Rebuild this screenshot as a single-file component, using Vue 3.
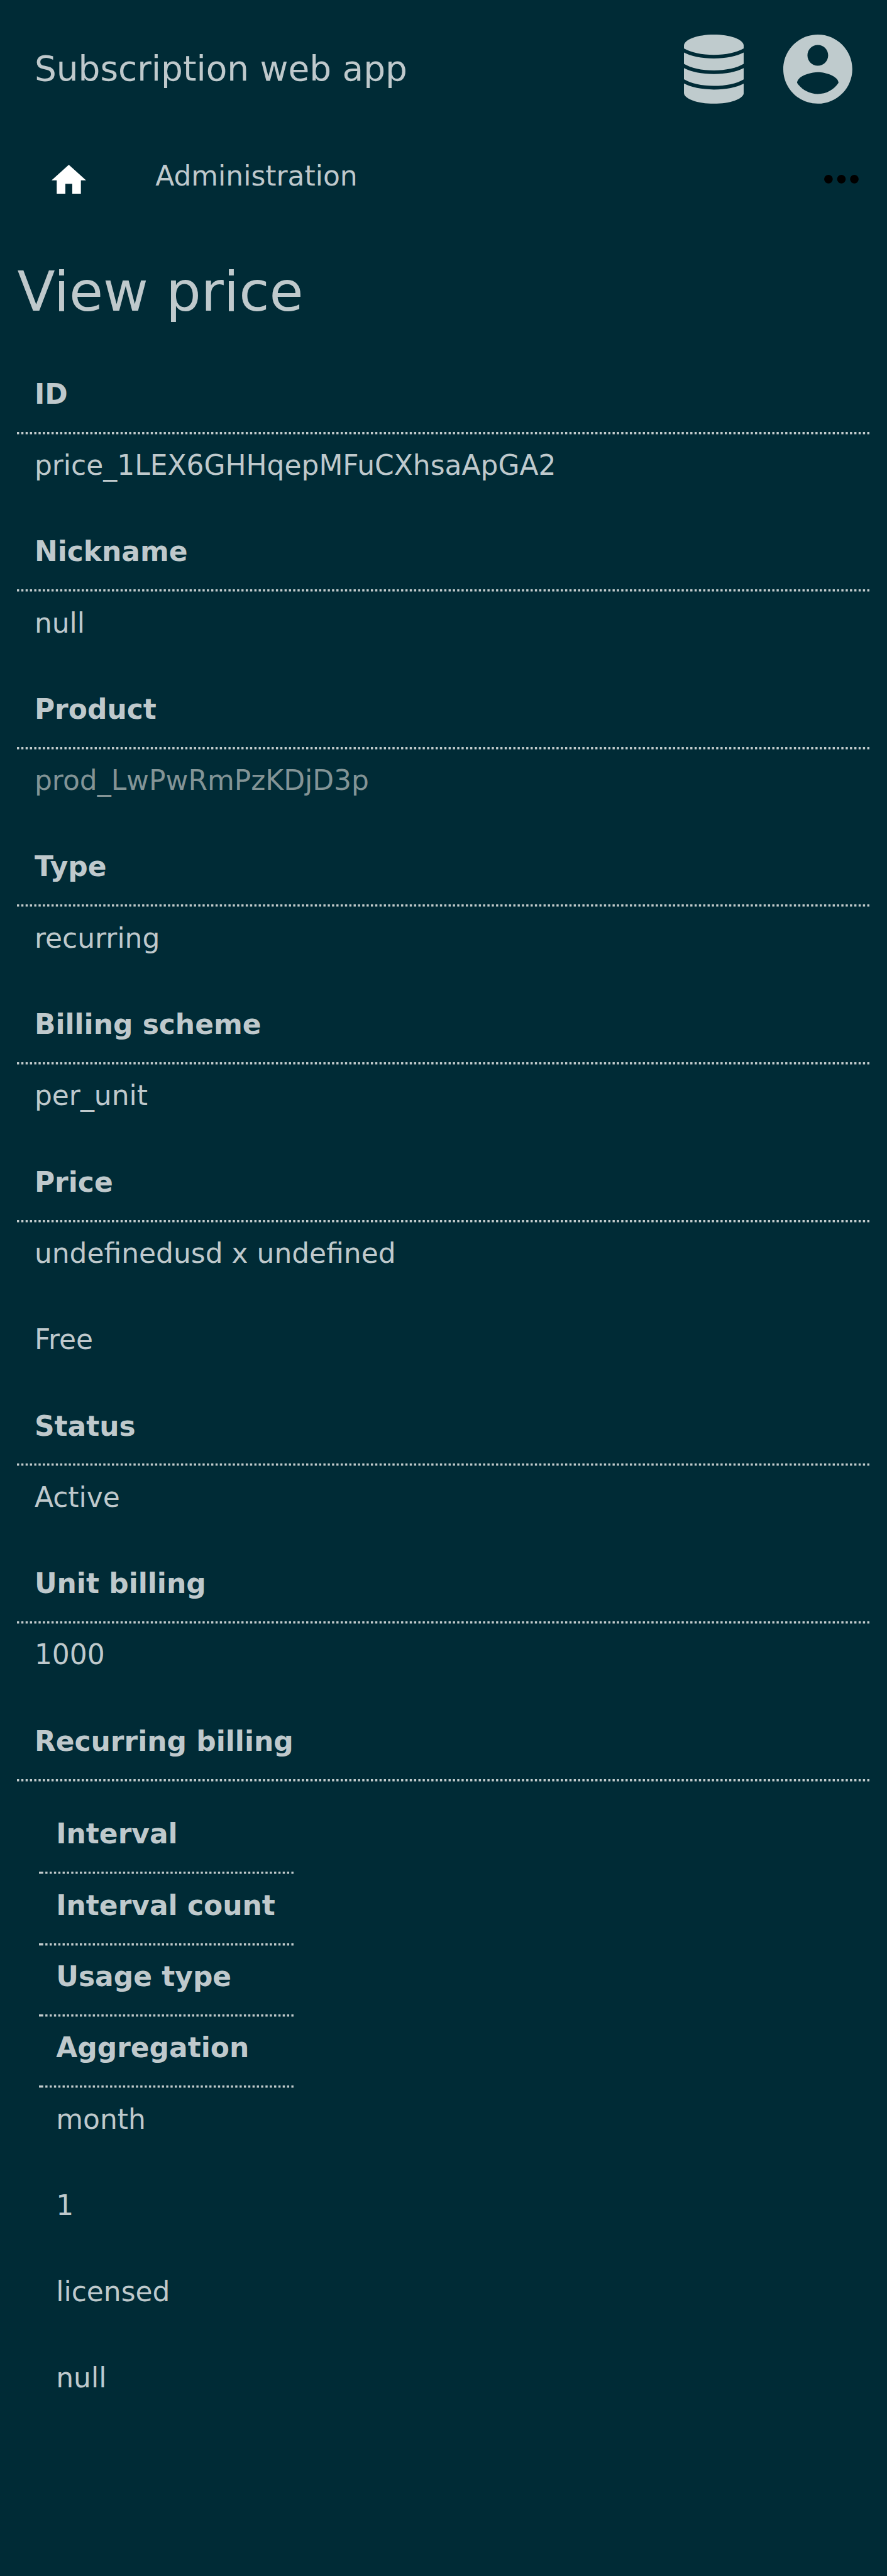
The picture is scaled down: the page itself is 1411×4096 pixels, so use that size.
<script setup>
const fields = [
  { label: 'ID', values: ['price_1LEX6GHHqepMFuCXhsaApGA2'] },
  { label: 'Nickname', values: ['null'] },
  { label: 'Product', values: ['prod_LwPwRmPzKDjD3p'], link: true },
  { label: 'Type', values: ['recurring'] },
  { label: 'Billing scheme', values: ['per_unit'] },
  { label: 'Price', values: ['undefinedusd x undefined', 'Free'] },
  { label: 'Status', values: ['Active'] },
  { label: 'Unit billing', values: ['1000'] },
  { label: 'Recurring billing', values: [] },
]
const recurringLabels = ['Interval', 'Interval count', 'Usage type', 'Aggregation']
const recurringValues = ['month', '1', 'licensed', 'null']
</script>

<template>
  <div class="page">
    <header class="header">
      <div class="app-name">Subscription web app</div>
      <svg class="icon-db" viewBox="0 0 97 112" preserveAspectRatio="none">
        <path d="M0 18C0 8 21.7 0 48.5 0S97 8 97 18V22.5C86 29 68 33 48.5 33S11 29 0 22.5Z" />
        <path d="M0 29C11 35 29 38.7 48.5 38.7S86 35 97 29V47.3C86 54 68 58 48.5 58S11 54 0 47.3Z" />
        <path d="M0 54.2C11 60.2 29 63.9 48.5 63.9S86 60.2 97 54.2V72.5C86 79.2 68 83.2 48.5 83.2S11 79.2 0 72.5Z" />
        <path d="M0 79.4C11 85.4 29 89.1 48.5 89.1S86 85.4 97 79.4V94.5C97 104 75.3 112 48.5 112S0 104 0 94.5Z" />
      </svg>
      <svg class="icon-user" viewBox="2 2 20 20">
        <path d="M12 2C6.48 2 2 6.48 2 12s4.48 10 10 10 10-4.48 10-10S17.52 2 12 2zm0 3c1.66 0 3 1.34 3 3s-1.34 3-3 3-3-1.34-3-3 1.34-3 3-3zm0 14.2c-2.5 0-4.71-1.28-6-3.22.03-1.99 4-3.08 6-3.08 1.99 0 5.97 1.09 6 3.08-1.29 1.94-3.5 3.22-6 3.22z" />
      </svg>
    </header>
    <nav class="nav">
      <svg class="icon-home" viewBox="2 3 20 17">
        <path d="M10 20v-6h4v6h5v-8h3L12 3 2 12h3v8z" />
      </svg>
      <a class="nav-link">Administration</a>
      <svg class="icon-more" viewBox="0 0 16 4">
        <circle cx="2" cy="2" r="2" />
        <circle cx="8" cy="2" r="2" />
        <circle cx="14" cy="2" r="2" />
      </svg>
    </nav>
    <h1 class="title">View price</h1>
    <main class="table">
      <template v-for="f in fields" :key="f.label">
        <div class="th">
          <span class="label">{{ f.label }}</span>
          <svg class="rule"><line class="dots" x1="0" x2="100%" y1="50%" y2="50%" /></svg>
        </div>
        <div v-for="v in f.values" :key="v" class="td" :class="{ link: f.link }">{{ v }}</div>
      </template>
      <section class="nested">
        <div v-for="l in recurringLabels" :key="l" class="th">
          <span class="label">{{ l }}</span>
          <svg class="rule">
            <line x1="0" x2="2rem" y1="50%" y2="50%" />
            <line class="dots" x1="2.95rem" x2="100%" y1="50%" y2="50%" />
          </svg>
        </div>
        <div v-for="v in recurringValues" :key="v" class="td">{{ v }}</div>
      </section>
    </main>
  </div>
</template>

<style>
html {
  font-size: 3.4329px;
  background: #002b36;
}
</style>

<style scoped>
.page {
  box-sizing: border-box;
  width: 100%;
  height: 4096px;
  overflow: hidden;
  background: #002b36;
  color: #bfc9cc;
  font-family: "DejaVu Sans", sans-serif;
  font-size: 12.8rem;
}
.header {
  display: flex;
  align-items: center;
  box-sizing: border-box;
  height: 64rem;
  padding: 0 16rem;
  fill: #bfcbcd;
}
.app-name {
  flex: 1;
  margin-bottom: 0.6rem;
  font-size: 16rem;
  line-height: 20rem;
}
.icon-db {
  width: 27.7rem;
  height: 32rem;
  margin-right: 18.3rem;
}
.icon-user {
  width: 32rem;
  height: 32rem;
}
.nav {
  display: flex;
  align-items: center;
  box-sizing: border-box;
  height: 38rem;
  padding: 0 13.1rem 0 24rem;
}
.icon-home {
  width: 16rem;
  height: 13.6rem;
  fill: #fff;
}
.nav-link {
  flex: 1;
  margin-left: 32rem;
  margin-bottom: 2.8rem;
  line-height: 16rem;
}
.icon-more {
  width: 16rem;
  height: 4rem;
}
.title {
  height: 66rem;
  margin: 0;
  padding-left: 8rem;
  font-size: 25.6rem;
  font-weight: 400;
  line-height: 66.6rem;
}
.table {
  margin: 0 8rem;
}
.th {
  display: flex;
  flex-direction: column;
  height: 33rem;
  font-weight: 700;
}
.label {
  height: 32rem;
  padding-left: 8rem;
  line-height: 29.4rem;
}
.rule {
  display: block;
  width: 100%;
  height: 1rem;
  overflow: visible;
  stroke: #c3cccd;
  stroke-width: 1rem;
}
.dots {
  stroke-dasharray: 1rem 1rem;
}
.td {
  height: 40rem;
  padding-left: 8rem;
  line-height: 29.4rem;
}
.link {
  color: #839496;
}
.nested {
  width: 118rem;
  margin: 10rem 0 0 10rem;
}
</style>
